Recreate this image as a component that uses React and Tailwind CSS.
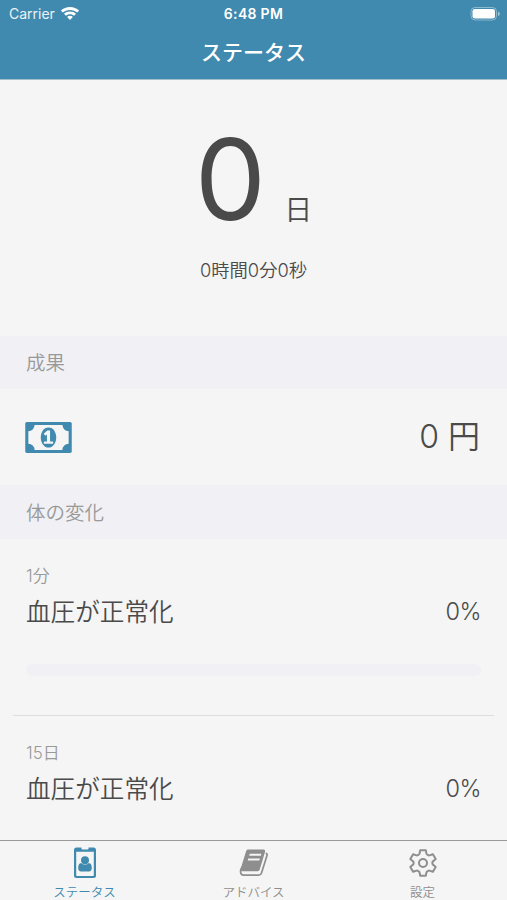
import React from 'react';

const WifiIcon = () => (
  <svg viewBox="0 0 20 15" className="ml-[5px] h-[15px] w-5" fill="white">
    <path d="M10 0c3.500 0 6.700 1.300 9.100 3.500l-1.900 2.100c-1.900-1.700-4.400-2.700-7.200-2.700S4.700 3.900 2.800 5.600L.9 3.500C3.300 1.300 6.500 0 10 0z" />
    <path d="M10 4.400c2.300 0 4.400.9 6 2.300l-1.900 2.100C13 7.800 11.600 7.200 10 7.200s-3 .6-4.100 1.600L4 6.700c1.600-1.400 3.700-2.300 6-2.300z" />
    <path d="M10 8.800c1.100 0 2.100.4 2.900 1.100L10 13.100 7.100 9.900c.8-.7 1.800-1.100 2.900-1.100z" />
  </svg>
);

const BatteryIcon = () => (
  <svg viewBox="0 0 31 15" className="h-[15px] w-[31px]">
    <rect x="1" y="0.500" width="25.500" height="12.500" rx="4" fill="none" stroke="white" strokeOpacity="0.4" />
    <rect x="2.500" y="2" width="22.500" height="9.500" rx="2.300" fill="white" />
    <path d="M28 4.500v4.600c1.100-.4 1.800-1.300 1.800-2.300s-.7-1.900-1.800-2.300z" fill="white" fillOpacity="0.5" />
  </svg>
);

const MoneyIcon = () => (
  <svg viewBox="0 256 1920 1280" className="h-[31px] w-[47px]" fill="#3f8aae">
    <path d="M768 1152h384v-96h-128v-448h-114l-148 137 77 80q42-37 55-57h2v288h-128v96zm512-256q0 70-21 142t-59.500 134-101.500 101-138 39-138-39-101.500-101-59.500-134-21-142 21-142 59.500-134 101.500-101 138-39 138 39 101.500 101 59.500 134 21 142zm512 256v-512q-106 0-181-75t-75-181h-1152q0 106-75 181t-181 75v512q106 0 181 75t75 181h1152q0-106 75-181t181-75zm128-832v1152q0 26-19 45t-45 19h-1792q-26 0-45-19t-19-45v-1152q0-26 19-45t45-19h1792q26 0 45 19t19 45z" />
  </svg>
);

const BadgeIcon = () => (
  <svg viewBox="0 0 24 32" className="h-8 w-6" fill="#3f8aae">
    <path
      fillRule="evenodd"
      d="M3.300 0.500h5.200v1.300c0 .5.300.8.800.8h5.400c.5 0 .8-.3.800-.8V.5h5.200c1.300 0 2.300 1 2.300 2.300v25.900c0 1.300-1 2.300-2.300 2.300H3.300C2 31 1 30 1 28.700V2.800C1 1.500 2 .5 3.300.5zM3.200 4.700v23.500c0 .4.300.7.700.7h16.200c.4 0 .7-.3.700-.7V4.700z"
    />
    <circle cx="12" cy="13.200" r="4" />
    <path d="M8.200 16c1 1 2.400 1.600 3.800 1.600s2.800-.6 3.800-1.600c2.200.2 3 2.500 3 4.900 0 2.100-1.200 3.500-2.700 3.500H7.900c-1.500 0-2.700-1.400-2.700-3.500 0-2.400.8-4.700 3-4.900z" />
  </svg>
);

const BookIcon = () => (
  <svg viewBox="0 0 30 30" className="h-[30px] w-[30px]">
    <path
      fill="#8e8e8e"
      fillRule="evenodd"
      d="M9.300 1.500h14.900c1.500 0 2.200 1 1.800 2.400l-5.200 17.300c-.5 1.500-1.300 2-2.800 2H3.700c-1.400 0-2.200-.3-2.600-1 .1-2 .9-2.900 1.600-4.800L7 3.500c.5-1.400 1.200-2 2.300-2zm1.500 4.200-.6 2.100h11.600l.6-2.100zm-1.500 4.700-.6 2.100h11.600l.6-2.100z"
    />
    <path
      d="M1.800 21.500c-.8 3.800.4 5.700 3.200 5.700h14.700c1.600 0 2.300-.7 2.800-2.200L28 7.500c.3-1 .1-1.600-.6-2"
      fill="none"
      stroke="#8e8e8e"
      strokeWidth="1.700"
      strokeLinecap="round"
    />
  </svg>
);

const GearIcon = () => (
  <svg viewBox="0 0 30 30" className="h-[30px] w-[30px]" fill="none" stroke="#8e8e8e" strokeWidth="2" strokeLinejoin="round">
    <path d="M12.200 2.200h5.600l.7 3.600q.2.600.8.900l.9.500q.6.400 1.200.2l3.500-1.200 2.800 4.800-2.800 2.400q-.5.400-.5 1v1.200q0 .6.500 1l2.800 2.400-2.800 4.800-3.500-1.200q-.6-.2-1.200.2l-.9.500q-.6.300-.8.900l-.7 3.600h-5.600l-.7-3.600q-.2-.6-.8-.9l-.9-.5q-.6-.4-1.200-.2l-3.500 1.200-2.800-4.800 2.800-2.400q.5-.4.500-1v-1.200q0-.6-.5-1l-2.800-2.400 2.800-4.800 3.500 1.200q.6.200 1.200-.2l.9-.5q.6-.3.800-.9z" />
    <circle cx="15" cy="15" r="4" />
  </svg>
);

const SectionHeader = ({ title, className }) => (
  <div className={`flex shrink-0 items-center bg-[#f0f0f5] pt-[3px] pl-[26px] text-[19.500px] font-[350] text-[#999] ${className}`}>
    {title}
  </div>
);

const Progress = ({ time, title, percent }) => (
  <div className="mx-[13px] h-[177px] shrink-0 border-b border-[#dedede] px-[13px] pt-[27px]">
    <p className="text-[17px] leading-5 font-[350] text-[#999]">{time}</p>
    <div className="mt-2 flex items-center justify-between text-[24.600px] leading-[36px] font-[350] text-[#4a4a4a]">
      <p>{title}</p>
      <p className="text-[23.500px] tracking-[-0.5px]">{percent}%</p>
    </div>
    <div className="mt-[34px] h-3 overflow-hidden rounded-full bg-[#f0f0f5]">
      <div className="h-full bg-[#3f8aae]" style={{ width: `${percent}%` }} />
    </div>
  </div>
);

const Tab = ({ label, active, children }) => (
  <div className="flex flex-1 flex-col items-center pt-[6px]">
    <div className="flex h-8 shrink-0 items-center">{children}</div>
    <p className={`mt-[5px] text-[12.500px] leading-[18px] font-[350] ${active ? 'text-[#3f8aae]' : 'text-[#8e8e8e]'}`}>{label}</p>
  </div>
);

const App = () => {
  return (
    <div className="flex h-[900px] w-[507px] flex-col overflow-hidden bg-[#f5f5f5] font-['Inter','Noto_Sans_CJK_JP',sans-serif] text-[#4a4a4a]">
      <header className="h-20 shrink-0 border-b border-[#a4bdca] bg-[#3f8aae] text-white">
        <div className="grid h-7 grid-cols-3 items-center px-[9px] text-[14px]">
          <div className="flex items-center">
            <span className="pb-px text-white/90">Carrier</span>
            <WifiIcon />
          </div>
          <p className="pb-px text-center font-semibold tracking-[0.3px]">6:48 PM</p>
          <div className="-mr-[3px] flex justify-end">
            <BatteryIcon />
          </div>
        </div>
        <h1 className="pt-px text-center text-[21px] leading-[48px] font-medium">ステータス</h1>
      </header>

      <main className="flex min-h-0 flex-1 flex-col overflow-hidden">
        <section className="h-64 shrink-0 pt-[39px] text-center">
          <div className="flex h-[120px] items-baseline justify-center">
            <span className="text-[113px] leading-[120px]">0</span>
            <span className="ml-[18px] text-[28px] leading-[30px] font-[350]">日</span>
          </div>
          <p className="mt-[17px] text-[18.300px] leading-7 font-[350]">0時間0分0秒</p>
        </section>

        <SectionHeader title="成果" className="h-[53px]" />
        <div className="flex h-24 shrink-0 items-center justify-between pr-[27px] pl-[25px]">
          <MoneyIcon />
          <p className="text-[32px] font-[350]">0 円</p>
        </div>
        <SectionHeader title="体の変化" className="h-[54px]" />
        <Progress time="1分" title="血圧が正常化" percent={0} />
        <Progress time="15日" title="血圧が正常化" percent={0} />
      </main>

      <nav className="flex h-[60px] shrink-0 border-t border-[#999] bg-[#f5f5f5]">
        <Tab label="ステータス" active>
          <BadgeIcon />
        </Tab>
        <Tab label="アドバイス">
          <BookIcon />
        </Tab>
        <Tab label="設定">
          <GearIcon />
        </Tab>
      </nav>
    </div>
  );
};

export default App;
